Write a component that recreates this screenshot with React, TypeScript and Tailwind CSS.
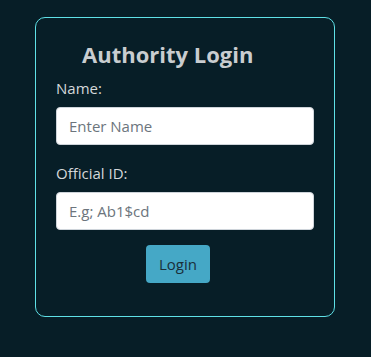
export default function App() {
    return (
        <div className="min-h-[357px] w-full bg-[#071e27] pt-[17px] pl-[35px]" style={{ fontFamily: '"Open Sans", "Noto Sans", sans-serif' }}>
            <div className="w-[300px] h-[300px] border border-[#5fe0e6] rounded-[10px] px-[20px] pt-[17px]">
                <h2 className="pl-[26px] text-[22px] font-bold leading-[38px] text-[#c9cdd0]">Authority Login</h2>
                <label className="block mt-[3px] mb-[7px] text-[15px] leading-[24px] text-[#d4d8da]">Name:</label>
                <input
                    type="text"
                    placeholder="Enter Name"
                    className="block w-[258px] h-[38px] rounded-[4px] border border-[#ced4da] bg-white px-[12px] text-[15px] text-[#495057] placeholder:text-[#6c757d] outline-none"
                />
                <label className="block mt-[16px] mb-[7px] text-[15px] leading-[24px] text-[#d4d8da]">Official ID:</label>
                <input
                    type="text"
                    placeholder="E.g; Ab1$cd"
                    className="block w-[258px] h-[38px] rounded-[4px] border border-[#ced4da] bg-white px-[12px] text-[15px] text-[#495057] placeholder:text-[#6c757d] outline-none"
                />
                <div className="flex mt-[15px] pl-[90px]">
                    <button className="h-[38px] px-[13px] rounded-[4px] bg-[#45a8c6] text-[15px] text-[#1a2f3a]">Login</button>
                </div>
            </div>
        </div>
    )
}
